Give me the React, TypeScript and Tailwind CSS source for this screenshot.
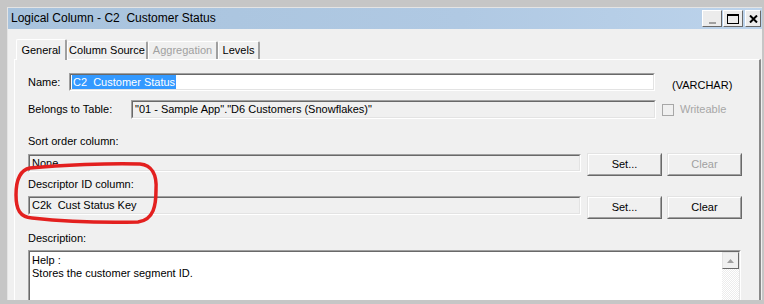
import type { ReactNode } from 'react';

function Sunken({ className, inner, children }: { className: string; inner: string; children?: ReactNode }) {
  return (
    <div className={`border border-t-[#a0a0a0] border-l-[#a0a0a0] border-r-white border-b-white ${className}`}>
      <div className={`h-full border border-t-[#696969] border-l-[#696969] border-r-[#e3e3e3] border-b-[#e3e3e3] ${inner}`}>
        {children}
      </div>
    </div>
  );
}

function Button({ label, disabled }: { label: string; disabled?: boolean }) {
  return (
    <div className="w-[75px] h-[23px] border border-t-[#e3e3e3] border-l-[#e3e3e3] border-r-[#696969] border-b-[#696969] bg-[#f0f0f0]">
      <div
        className={`h-full flex items-center justify-center border border-t-white border-l-white border-r-[#a0a0a0] border-b-[#a0a0a0] ${
          disabled ? 'text-[#a0a0a0]' : 'text-black'
        }`}
      >
        {label}
      </div>
    </div>
  );
}

function Tab({ label, w, active, disabled }: { label: string; w: string; active?: boolean; disabled?: boolean }) {
  return (
    <div
      className={`${w} flex items-center justify-center whitespace-nowrap rounded-t-[2px] border-t border-l border-t-white border-l-white border-r-2 border-r-[#a0a0a0] bg-[#f0f0f0] ${
        active ? 'relative z-10 h-[21px] -mb-px pt-[1px]' : 'h-[18px]'
      } ${disabled ? 'text-[#a0a0a0]' : 'text-black'}`}
    >
      {label}
    </div>
  );
}

function TitleButton({ children, w }: { children: ReactNode; w: string }) {
  return (
    <div className={`${w} h-[17px] border border-t-white border-l-white border-r-[#696969] border-b-[#696969] bg-[#ececec] flex items-center justify-center`}>
      {children}
    </div>
  );
}

export default function App() {
  return (
    <div className="relative w-[764px] h-[304px] overflow-hidden bg-[#c6c6c6] pt-[7px] pl-[7px] pr-[2px] pb-[4px] text-[11px] leading-[13px] text-black [font-family:'Liberation_Sans',Arial,sans-serif]">
      <div className="h-full flex flex-col bg-[#f0f0f0] border-t border-l border-t-[#e4e4e4] border-l-[#e4e4e4]">
        {/* Title bar */}
        <div className="h-[21px] flex items-center justify-between bg-[linear-gradient(to_right,#a8c3dd,#b0c9e3_60%,#bcd3eb)] pl-[3px] pr-[1px]">
          <span className="text-[12px] whitespace-pre">Logical Column - C2  Customer Status</span>
          <div className="flex items-center gap-[1px]">
            <TitleButton w="w-[20px]">
              <div className="mt-[8px] w-[7px] h-[2px] bg-[#a0a0a0]" />
            </TitleButton>
            <TitleButton w="w-[20px]">
              <div className="w-[12px] h-[10px] border border-t-2 border-black" />
            </TitleButton>
            <div className="ml-[1px]">
              <TitleButton w="w-[16px]">
                <svg width="9" height="8" viewBox="0 0 9 8">
                  <path d="M1 0.5 L8 7.5 M8 0.5 L1 7.5" stroke="black" strokeWidth="2" />
                </svg>
              </TitleButton>
            </div>
          </div>
        </div>

        {/* Body */}
        <div className="flex-1 flex flex-col pt-[9px] pl-[6px] pr-[1px] min-h-0">
          <div className="flex items-end pl-[2px] h-[21px]">
            <Tab label="General" w="w-[51px]" active />
            <Tab label="Column Source" w="w-[81px]" />
            <Tab label="Aggregation" w="w-[70px]" disabled />
            <Tab label="Levels" w="w-[42px]" />
          </div>

          <div className="flex-1 min-h-0 overflow-hidden flex flex-col border-t border-l border-r-2 border-t-white border-l-white border-r-[#8a8a8a] pl-[13px]">
            {/* Name */}
            <div className="mt-[13px] flex items-start h-[18px] shrink-0">
              <span className="w-[41px] mt-[3px]">Name:</span>
              <Sunken className="w-[586px] h-[18px] bg-white" inner="flex items-center pl-[1px]">
                <span className="bg-[#3399ff] text-white whitespace-pre px-[1px] leading-[14px]">C2  Customer Status</span>
              </Sunken>
              <span className="ml-[17px] mt-[6px]">(VARCHAR)</span>
            </div>

            {/* Belongs to table */}
            <div className="mt-[9px] flex items-center h-[19px] shrink-0">
              <span className="w-[103px]">Belongs to Table:</span>
              <Sunken className="w-[525px] h-[19px]" inner="flex items-center pl-[2px]">
                <span>"01 - Sample App"."D6 Customers (Snowflakes)"</span>
              </Sunken>
              <div className="ml-[6px] w-[12px] h-[12px] border border-[#a7a7a7] bg-[#f0f0f0]" />
              <span className="ml-[6px] text-[#a7a7a7]">Writeable</span>
            </div>

            {/* Sort order */}
            <div className="mt-[16px] h-[13px] shrink-0">Sort order column:</div>
            <div className="mt-[5px] flex items-start h-[23px] shrink-0">
              <Sunken className="mt-[1px] w-[553px] h-[18px]" inner="flex items-center pl-[2px]">
                <span>None</span>
              </Sunken>
              <div className="ml-[6px]">
                <Button label="Set..." />
              </div>
              <div className="ml-[5px]">
                <Button label="Clear" disabled />
              </div>
            </div>

            {/* Descriptor */}
            <div className="mt-[2px] h-[13px] shrink-0">Descriptor ID column:</div>
            <div className="mt-[5px] flex items-start h-[23px] shrink-0">
              <Sunken className="w-[553px] h-[19px]" inner="flex items-center pl-[2px]">
                <span className="whitespace-pre">C2k  Cust Status Key</span>
              </Sunken>
              <div className="ml-[6px]">
                <Button label="Set..." />
              </div>
              <div className="ml-[5px]">
                <Button label="Clear" />
              </div>
            </div>

            {/* Description */}
            <div className="mt-[13px] h-[13px] shrink-0">Description:</div>
            <Sunken className="mt-[5px] w-[713px] h-[80px] shrink-0 bg-white" inner="flex">
              <div className="flex-1 pl-[2px] pt-[2px]">
                <div>Help :</div>
                <div>Stores the customer segment ID.</div>
              </div>
              <div className="w-[17px] flex flex-col">
                <div className="h-[17px] border border-t-[#e3e3e3] border-l-[#e3e3e3] border-r-[#696969] border-b-[#696969] bg-[#f0f0f0] flex items-center justify-center">
                  <svg width="7" height="4" viewBox="0 0 7 4">
                    <path d="M3.5 0 L7 4 L0 4 Z" fill="#a0a0a0" />
                  </svg>
                </div>
                <div className="flex-1 bg-[conic-gradient(#ffffff_25%,#ececec_0_50%,#ffffff_0_75%,#ececec_0)] bg-[length:2px_2px]" />
              </div>
            </Sunken>
          </div>
        </div>
      </div>

      {/* red hand-drawn mark */}
      <svg className="absolute left-0 top-0 pointer-events-none" width="764" height="304" viewBox="0 0 764 304">
        <path
          d="M30 168 C 60 165, 110 163, 140 164 C 152 165, 157 175, 156 190 C 156 205, 154 220, 138 222 C 100 223, 60 221, 32 218 C 20 217, 16 210, 16 195 C 16 180, 20 170, 30 168 Z"
          fill="none"
          stroke="#e3201f"
          strokeWidth="3.5"
          strokeLinejoin="round"
        />
      </svg>
    </div>
  );
}
